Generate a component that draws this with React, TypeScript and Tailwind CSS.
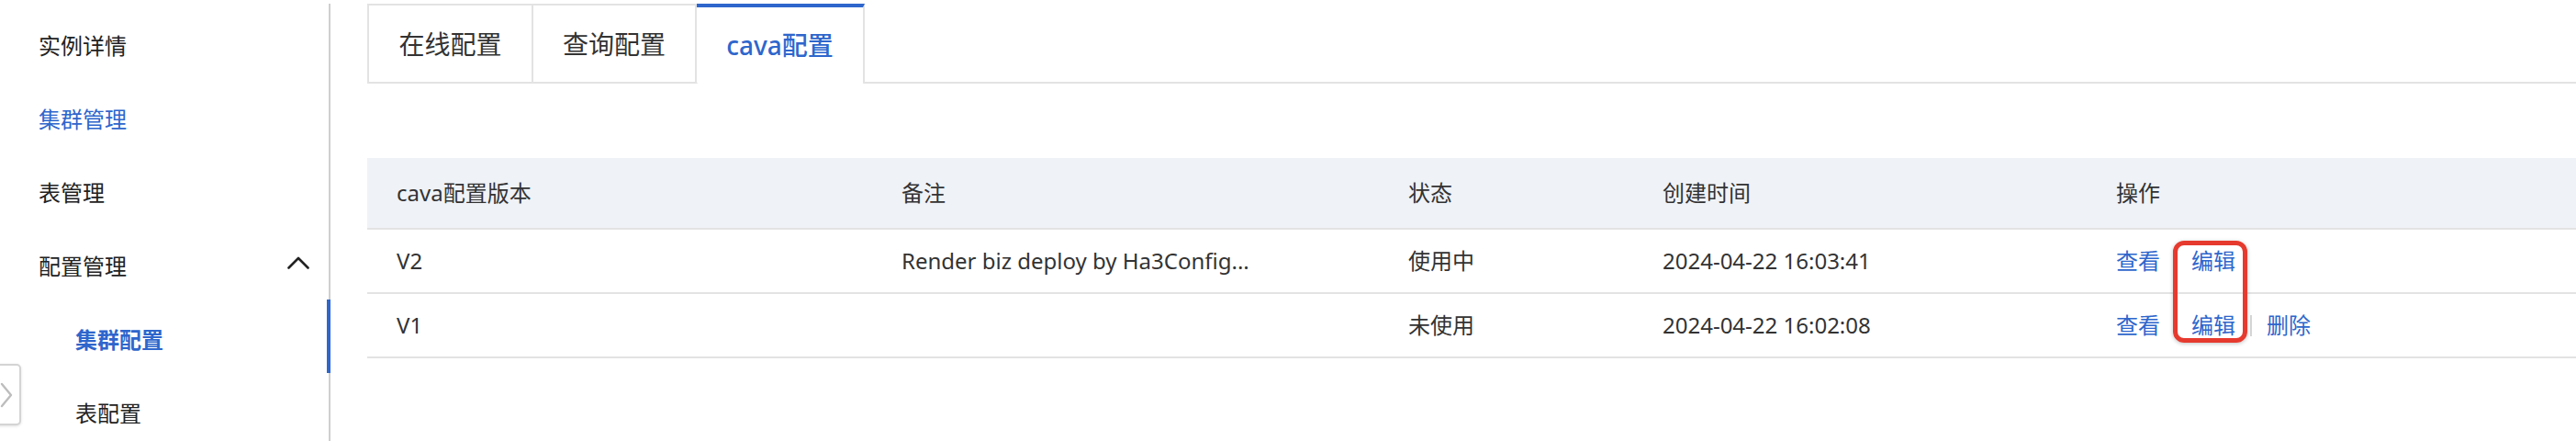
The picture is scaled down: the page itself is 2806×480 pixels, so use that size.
import React from "react";

const BLUE = "text-[#2e66cc]";

function SideItem({ label, sub, active, parentActive, chevron }: { label: string; sub?: boolean; active?: boolean; parentActive?: boolean; chevron?: boolean }) {
  return (
    <div className={`relative flex h-[80px] items-center justify-between pr-[21px] text-[24px] ${sub ? "pl-[82px]" : "pl-[42px]"} ${active ? "font-semibold text-[#2e66cc]" : parentActive ? BLUE : "text-[#222222]"}`}>
      <span className="pt-[7px]">{label}</span>
      {chevron && (
        <svg width="24" height="14" viewBox="0 0 24 14" fill="none">
          <polyline points="1.5,12.5 12,2 22.5,12.5" stroke="#222" strokeWidth="2.6" strokeLinecap="round" strokeLinejoin="round" />
        </svg>
      )}
      {active && <div className="absolute right-[-2px] top-0 h-[80px] w-[4px] bg-[#2e66cc]" />}
    </div>
  );
}

function Sep() {
  return <div className="mx-[16px] h-[23px] w-[2px] bg-[#d6d6d6]" />;
}

export default function App() {
  const rows = [
    { v: "V2", note: "Render biz deploy by Ha3Config...", status: "使用中", time: "2024-04-22 16:03:41", del: false },
    { v: "V1", note: "", status: "未使用", time: "2024-04-22 16:02:08", del: true },
  ];
  return (
    <div className="relative flex h-[480px] w-[2806px] overflow-hidden bg-white font-['Noto_Sans','Noto_Sans_CJK_SC',sans-serif]">
      {/* sidebar */}
      <div className="w-[360px] shrink-0 pt-[4px]">
        <div className="h-full border-r-2 border-[#cfcfcf] pt-[2px]">
          <SideItem label="实例详情" />
          <SideItem label="集群管理" parentActive />
          <SideItem label="表管理" />
          <SideItem label="配置管理" chevron />
          <SideItem label="集群配置" sub active />
          <SideItem label="表配置" sub />
        </div>
      </div>

      {/* collapse button */}
      <div className="absolute left-[-8px] top-[396px] flex h-[67px] w-[31px] items-center justify-end rounded-[5px] border-2 border-[#d4d4d4] bg-white pr-[7px] shadow-[0_1px_3px_rgba(0,0,0,0.12)]">
        <svg width="14" height="28" viewBox="0 0 14 28" fill="none">
          <polyline points="2,2 12,14 2,26" stroke="#bdbdbd" strokeWidth="2.4" strokeLinecap="round" strokeLinejoin="round" />
        </svg>
      </div>

      {/* main */}
      <div className="flex-1 pl-[40px] pt-[4px]">
        {/* tabs */}
        <div className="flex h-[87px] border-b-2 border-[#e3e3e3]">
          <div className="flex h-[85px] w-[181px] items-center justify-center border-2 border-b-0 border-[#e3e3e3] text-[28px] text-[#333333]">在线配置</div>
          <div className="flex h-[85px] w-[178px] items-center justify-center border-t-2 border-r-2 border-[#e3e3e3] text-[28px] text-[#333333]">查询配置</div>
          <div className="flex h-[87px] w-[183px] items-center justify-center rounded-b-[2px] border-t-4 border-r-2 border-t-[#2e66cc] border-r-[#e3e3e3] bg-white pb-[2px] text-[28px] font-medium text-[#2e66cc]">cava配置</div>
        </div>

        {/* table */}
        <div className="relative mt-[81px] text-[24px] text-[#333333]">
          <div className="flex h-[78px] items-center border-b-2 border-[#e3e3e3] bg-[#eff2f7]">
            <div className="w-[550px] shrink-0 pl-[32px]">cava配置版本</div>
            <div className="w-[552px] shrink-0 pl-[32px]">备注</div>
            <div className="w-[277px] shrink-0 pl-[32px]">状态</div>
            <div className="w-[494px] shrink-0 pl-[32px]">创建时间</div>
            <div className="flex-1 pl-[32px]">操作</div>
          </div>
          {rows.map((r) => (
            <div key={r.v} className="flex h-[70px] items-center border-b-2 border-[#e3e3e3]">
              <div className="w-[550px] shrink-0 pl-[32px]">{r.v}</div>
              <div className="w-[552px] shrink-0 pl-[32px]">{r.note}</div>
              <div className="w-[277px] shrink-0 pl-[32px]">{r.status}</div>
              <div className="w-[494px] shrink-0 pl-[32px]">{r.time}</div>
              <div className={`flex flex-1 items-center pl-[32px] ${BLUE}`}>
                <span>查看</span>
                <Sep />
                <span>编辑</span>
                {r.del && (
                  <>
                    <Sep />
                    <span>删除</span>
                  </>
                )}
              </div>
            </div>
          ))}
          {/* annotation box */}
          <div className="absolute left-[1967px] top-[90px] h-[111px] w-[81px] rounded-[12px] border-[5px] border-[#e63a2e] shadow-[0_1px_4px_rgba(0,0,0,0.25)]" />
        </div>
      </div>
    </div>
  );
}
